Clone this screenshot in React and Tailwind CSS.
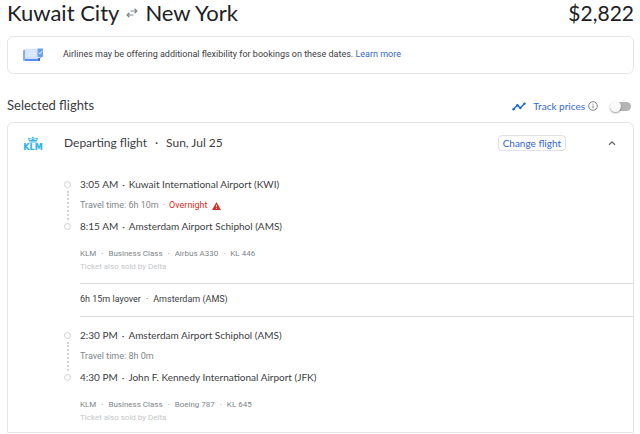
const display = "font-['Lato','Liberation_Sans',sans-serif]";

function Dot({ className = "px-[5px]" }) {
  return <span className={className}>·</span>;
}

function SwapIcon() {
  return (
    <svg viewBox="0 0 12 10" className="h-[10px] w-3" fill="none" stroke="#80868b" strokeWidth="1.2" role="img" aria-label="round trip">
      <path d="M4.500 3h6.500M8.600.8 10.900 3 8.600 5.200M7.500 7H1M3.400 4.800 1.100 7l2.300 2.200" />
    </svg>
  );
}

function TicketIcon() {
  return (
    <svg viewBox="0 0 20 14" className="h-[14px] w-5" aria-hidden="true">
      <path d="M0 2.500 2 1.500v9.500h15v2H1.500Q0 13 0 11.500z" fill="#86aef5" />
      <path d="M2 10.500h15v1.500q0 1-1 1H3q-1 0-1-1z" fill="#5b8def" />
      <rect x="2" y=".8" width="13" height="9.900" rx=".8" fill="#d2e3fc" />
      <path d="M4 3h8M4 5.400h9M4 7.800h8" stroke="#e6effd" strokeWidth="1" />
      <path d="M14.500.600H20v7.900l-2.500 1.500-3-1.500z" fill="#6f9ff0" />
      <path d="m15.700 4.600 1.200 1.200 2.100-2.600" fill="none" stroke="#fff" strokeWidth="1" />
      <path d="M15 10h2v3h-2z" fill="#3d70d8" />
    </svg>
  );
}

function KlmLogo() {
  return (
    <svg viewBox="0 0 22 13" className="h-[13px] w-[22px] overflow-visible" role="img" aria-label="KLM">
      <g fill="#2fb4ea">
        <rect x="10.500" y="-.3" width="1" height="2.500" />
        <rect x="9.900" y=".2" width="2.200" height=".7" />
        <circle cx="7" cy="1.700" r=".9" />
        <circle cx="15" cy="1.700" r=".9" />
        <circle cx="9" cy="1.600" r=".7" />
        <circle cx="13" cy="1.600" r=".7" />
        <path d="M6.400 2.200l2.200 1L11 1.800l2.400 1.400 2.200-1-.9 2.300H7.300z" />
        <rect x="7.500" y="4.900" width="7" height=".6" />
        <text x="11" y="12.600" textAnchor="middle" fontFamily="DejaVu Sans, sans-serif" fontWeight="700" fontSize="8" stroke="#2fb4ea" strokeWidth=".2">KLM</text>
      </g>
    </svg>
  );
}

function TrendIcon() {
  return (
    <svg viewBox="0 0 14 9" className="h-[9px] w-[14px]" aria-hidden="true" fill="#1a66d6">
      <path d="M1.500 7.300 5.400 3.300 8.300 6 12.500 1.600" fill="none" stroke="#1a66d6" strokeWidth="1.400" />
      <circle cx="1.500" cy="7.300" r="1.200" />
      <circle cx="5.400" cy="3.300" r="1.200" />
      <circle cx="8.300" cy="6" r="1.200" />
      <circle cx="12.500" cy="1.600" r="1.200" />
    </svg>
  );
}

function InfoIcon() {
  return (
    <svg viewBox="0 0 10 10" className="size-[10px]" fill="none" stroke="#70757a" strokeWidth=".9" aria-hidden="true">
      <circle cx="5" cy="5" r="4.300" />
      <path d="M5 4.500v2.700M5 2.700v1" />
    </svg>
  );
}

function WarningIcon() {
  return (
    <svg viewBox="0 0 9 8" className="h-2 w-[9px]" aria-hidden="true">
      <path d="M4.500 0 9 8H0z" fill="#d93025" />
      <path d="M4.500 2.800v2.400M4.500 6v1" stroke="#fff" strokeWidth=".8" />
    </svg>
  );
}

function Stop({ time, place }) {
  return (
    <div className={`h-4 text-[10px] leading-[15px] text-[#3c4043] ${display}`}>
      {time}
      <Dot className="px-1" />
      {place}
    </div>
  );
}

function Marker() {
  return <span className="size-[7px] rounded-full border border-[#cfd1d4]" />;
}

function Leg({ from, to, duration, overnight, details }) {
  return (
    <section className="flex gap-[9px] pb-2 pl-14">
      <div className="flex h-[58px] flex-col items-center pt-1 pb-[5px]" aria-hidden="true">
        <Marker />
        <span className="my-[3px] grow border-l-2 border-dotted border-[#d2d4d7]" />
        <Marker />
      </div>
      <div className="grow">
        <Stop {...from} />
        <div className="my-1 flex h-[18px] items-center text-[9px] text-[#80868b]">
          Travel time: {duration}
          {overnight && (
            <>
              <Dot className="px-1" />
              <span className="flex items-center gap-1 text-[#d93025]">
                Overnight <WarningIcon />
              </span>
            </>
          )}
        </div>
        <Stop {...to} />
        <div className="mt-3 text-[8px] leading-[13px] text-[#80868b]">
          {details.map((item, i) => (
            <span key={item}>
              {i > 0 && <Dot />}
              {item}
            </span>
          ))}
        </div>
        <div className="text-[8px] leading-[13px] text-[#c4c7ca]">Ticket also sold by Delta</div>
      </div>
    </section>
  );
}

export default function App() {
  return (
    <main className="bg-white pr-[6px] pl-[7px] font-['Roboto','Liberation_Sans',sans-serif] text-[#3c4043]">
      <h1 className={`flex h-9 items-center pb-[11px] text-[22px] leading-6 text-[#202124] ${display}`}>
        Kuwait City
        <span className="mx-[7px]"><SwapIcon /></span>
        New York
        <span className="ml-auto text-[21px]">$2,822</span>
      </h1>

      <div className="flex h-[38px] items-center rounded-md border border-[#e4e6e9] pl-[15px] text-[9px]">
        <TicketIcon />
        <p className="ml-5">
          Airlines may be offering additional flexibility for bookings on these dates.{" "}
          <a href="#learn-more" className="text-[#3367d6]">Learn more</a>
        </p>
      </div>

      <div className="mt-5 flex h-6 items-center">
        <h2 className={`text-[13px] ${display}`}>Selected flights</h2>
        <div className="ml-auto flex items-center">
          <TrendIcon />
          <label htmlFor="track" className={`mr-[3px] ml-[7px] text-[10px] text-[#3367d6] ${display}`}>Track prices</label>
          <InfoIcon />
          <input
            id="track"
            type="checkbox"
            role="switch"
            className="mr-[3px] ml-[13px] flex h-[9px] w-5 appearance-none items-center rounded-full bg-[#b4b4b4] before:-ml-[1px] before:size-[11px] before:rounded-full before:bg-[#fafafa] before:shadow-[0_1px_2px_rgba(0,0,0,0.4)] before:content-[''] checked:justify-end checked:bg-[#8ab4f8]"
          />
        </div>
      </div>

      <article className="mt-1 rounded-t-md border border-[#e4e6e9]">
        <header className="flex h-10 items-center pr-[17px] pl-[14px]">
          <KlmLogo />
          <h3 className={`ml-5 text-[12px] ${display}`}>
            Departing flight
            <Dot className="px-2" />
            Sun, Jul 25
          </h3>
          <button type="button" className={`ml-auto h-4 rounded-sm border border-[#dfe1e5] px-1 text-[10px] leading-[14px] text-[#3367d6] ${display}`}>
            Change flight
          </button>
          <button type="button" aria-label="Collapse flight details" className="ml-[42px]">
            <svg viewBox="0 0 8 8" className="size-2" fill="none" stroke="#5f6368" strokeWidth="1.300">
              <path d="M1 5.800 4 2.800l3 3" />
            </svg>
          </button>
        </header>

        <div className="pt-[14px]">
          <Leg
            from={{ time: "3:05 AM", place: "Kuwait International Airport (KWI)" }}
            to={{ time: "8:15 AM", place: "Amsterdam Airport Schiphol (AMS)" }}
            duration="6h 10m"
            overnight
            details={["KLM", "Business Class", "Airbus A330", "KL 446"]}
          />
          <div className="mt-[2px] mb-[11px] ml-[72px] flex h-[34px] items-center border-y border-[#dadce0] text-[9px]">
            6h 15m layover
            <Dot />
            Amsterdam (AMS)
          </div>
          <Leg
            from={{ time: "2:30 PM", place: "Amsterdam Airport Schiphol (AMS)" }}
            to={{ time: "4:30 PM", place: "John F. Kennedy International Airport (JFK)" }}
            duration="8h 0m"
            details={["KLM", "Business Class", "Boeing 787", "KL 645"]}
          />
        </div>
      </article>
    </main>
  );
}
